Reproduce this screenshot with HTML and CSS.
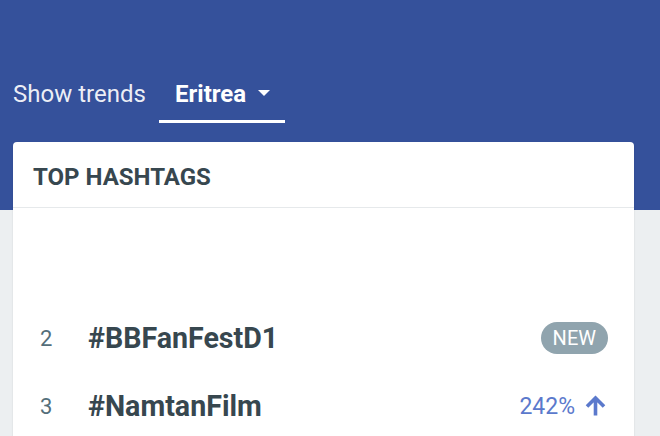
FILE: index.html
```html
<!DOCTYPE html>
<html>
<head>
<meta charset="utf-8">
<link rel="stylesheet" href="styles.css">
</head>
<body>
<header class="top">
  <div class="tabs">
    <span class="label">Show trends</span>
    <span class="tab">Eritrea<span class="caret"></span></span>
  </div>
</header>
<section class="card">
  <div class="card-head">TOP HASHTAGS</div>
  <ul class="list">
    <li class="row empty"></li>
    <li class="row">
      <span class="rank">2</span>
      <span class="tag">#BBFanFestD1</span>
      <span class="pill">NEW</span>
    </li>
    <li class="row">
      <span class="rank">3</span>
      <span class="tag">#NamtanFilm</span>
      <span class="trend">242%
        <svg class="arrow" viewBox="0 0 24 24" width="25" height="24"><path d="M12 21.5V4M3.5 12.5L12 4l8.5 8.5" fill="none" stroke="currentColor" stroke-width="3.6" stroke-linecap="butt" stroke-linejoin="miter"/></svg>
      </span>
    </li>
  </ul>
</section>
</body>
</html>
```
FILE: styles.css
```css
* { box-sizing: border-box; }
html, body { margin: 0; padding: 0; }
body {
  width: 660px;
  height: 436px;
  overflow: hidden;
  font-family: Roboto, "Liberation Sans", sans-serif;
  background: linear-gradient(#35519b 0, #35519b 210px, #eceff1 210px);
}
.top {
  padding: 75px 13px 0;
}
.tabs {
  display: flex;
  align-items: flex-start;
}
.label {
  color: rgba(255,255,255,0.92);
  font-size: 24px;
  line-height: 39px;
  width: 146px;
}
.tab {
  display: flex;
  align-items: center;
  color: #fff;
  font-weight: 700;
  font-size: 24px;
  line-height: 39px;
  padding: 0 15px 6px 16px;
  border-bottom: 3px solid #fff;
  width: 126px;
}
.caret {
  width: 0;
  height: 0;
  margin-left: 12px;
  margin-top: -3px;
  border-left: 6px solid transparent;
  border-right: 6px solid transparent;
  border-top: 6px solid #fff;
}
.card {
  margin: 19px 26px 0 13px;
  background: #fff;
  border-radius: 4px;
  box-shadow: 0 1px 2px rgba(0,0,0,0.12);
}
.card-head {
  height: 66px;
  padding: 5px 20px 0;
  line-height: 60px;
  font-size: 24px;
  font-weight: 700;
  color: #37474f;
  border-bottom: 1px solid #e6e9eb;
}
.list {
  list-style: none;
  margin: 0;
  padding: 28px 26px 0 27px;
}
.row {
  display: flex;
  align-items: center;
  height: 68px;
}
.rank {
  width: 48px;
  font-size: 22px;
  color: #546e7a;
}
.tag {
  flex: 1;
  font-size: 28.6px;
  font-weight: 700;
  color: #37474f;
}
.pill {
  background: #90a4ae;
  color: #fff;
  font-size: 20px;
  height: 32px;
  line-height: 32px;
  padding: 0 12px;
  border-radius: 16px;
}
.trend {
  display: flex;
  align-items: center;
  gap: 8px;
  font-size: 23px;
  color: #5b79cc;
}
.arrow { color: #5b79cc; display: block; }
```
